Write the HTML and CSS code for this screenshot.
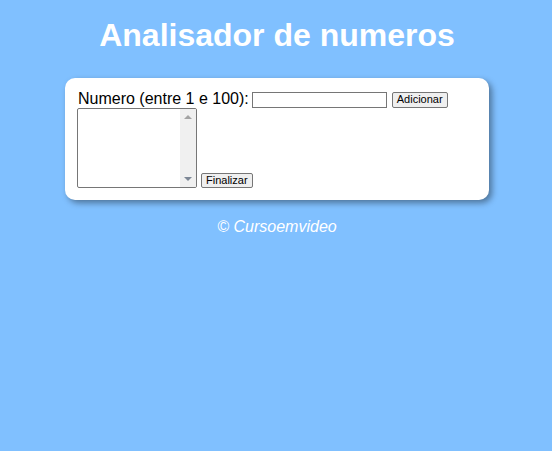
FILE: index.html
```html
<!DOCTYPE html>
<html lang="pt">
<head>
<meta charset="utf-8">
<title>Analisador de numeros</title>
<link rel="stylesheet" href="styles.css">
</head>
<body>
<header class="top">
  <h1 class="title">Analisador de numeros</h1>
</header>
<section class="card">
  <div class="row-input">
    <label class="label" for="num">Numero (entre 1 e 100):</label>
    <input class="field" type="number" id="num">
    <button class="btn btn-add" type="button">Adicionar</button>
  </div>
  <div class="row-list">
    <div class="list-wrap">
      <select class="list" id="lista" size="10"></select>
      <div class="scrollbar" aria-hidden="true">
        <span class="arrow arrow-up"></span>
        <span class="arrow arrow-down"></span>
      </div>
    </div>
    <button class="btn btn-end" type="button">Finalizar</button>
  </div>
</section>
<footer class="foot">
  <p class="copy">&copy; Cursoemvideo</p>
</footer>
</body>
</html>
```
FILE: styles.css
```css
html, body {
  margin: 0;
  padding: 0;
}
body {
  background: #80c0ff;
  font-family: "Liberation Sans", Arial, sans-serif;
  width: 552px;
  height: 451px;
  overflow: hidden;
  padding-left: 2px;
  box-sizing: border-box;
}
.top {
  padding-top: 17px;
}
.title {
  margin: 0;
  color: #ffffff;
  font-size: 32px;
  font-weight: bold;
  text-align: center;
  line-height: 37px;
}
.card {
  background: #ffffff;
  width: 400px;
  margin: 24px auto 0;
  padding: 12px;
  border-radius: 10px;
  box-shadow: 3px 3px 6px rgba(0, 0, 0, 0.4);
}
.row-input {
  display: flex;
  align-items: center;
  height: 18px;
  line-height: 18px;
}
.label {
  font-size: 16px;
  color: #000000;
  margin-left: 1px;
}
.field {
  box-sizing: border-box;
  width: 135px;
  height: 16px;
  margin: 1px 0 0 3px;
  padding: 0 2px;
  border: 1px solid #767676;
  border-radius: 0;
  background: #ffffff;
  font-size: 11px;
  -moz-appearance: textfield;
  appearance: textfield;
}
.field::-webkit-inner-spin-button,
.field::-webkit-outer-spin-button {
  -webkit-appearance: none;
  margin: 0;
}
.btn {
  box-sizing: border-box;
  height: 16px;
  padding: 0 4px;
  border: 1px solid #767676;
  border-radius: 2px;
  background: #efefef;
  color: #000000;
  font-family: "Liberation Sans", Arial, sans-serif;
  font-size: 11px;
  line-height: 13px;
}
.btn-add {
  margin: 1px 0 0 5px;
}
.row-list {
  display: flex;
  align-items: flex-end;
}
.list-wrap {
  position: relative;
  width: 120px;
  height: 80px;
}
.list {
  display: block;
  box-sizing: border-box;
  width: 120px;
  height: 80px;
  margin: 0;
  border: 1px solid #767676;
  border-radius: 2px;
  background: #ffffff;
}
.scrollbar {
  position: absolute;
  top: 1px;
  right: 1px;
  bottom: 1px;
  width: 16px;
  background: #f0f0f0;
  border-radius: 0 1px 1px 0;
}
.arrow {
  position: absolute;
  left: 4px;
  width: 0;
  height: 0;
  border-left: 4px solid transparent;
  border-right: 4px solid transparent;
}
.arrow-up {
  top: 6px;
  border-bottom: 4px solid #a3a3a3;
}
.arrow-down {
  bottom: 6px;
  border-top: 4px solid #7d8796;
}
.btn-end {
  height: 15px;
  margin-left: 4px;
}
.foot {
  margin-top: 18px;
}
.copy {
  margin: 0;
  color: #ffffff;
  font-style: italic;
  font-size: 16px;
  line-height: 18px;
  text-align: center;
}
```
